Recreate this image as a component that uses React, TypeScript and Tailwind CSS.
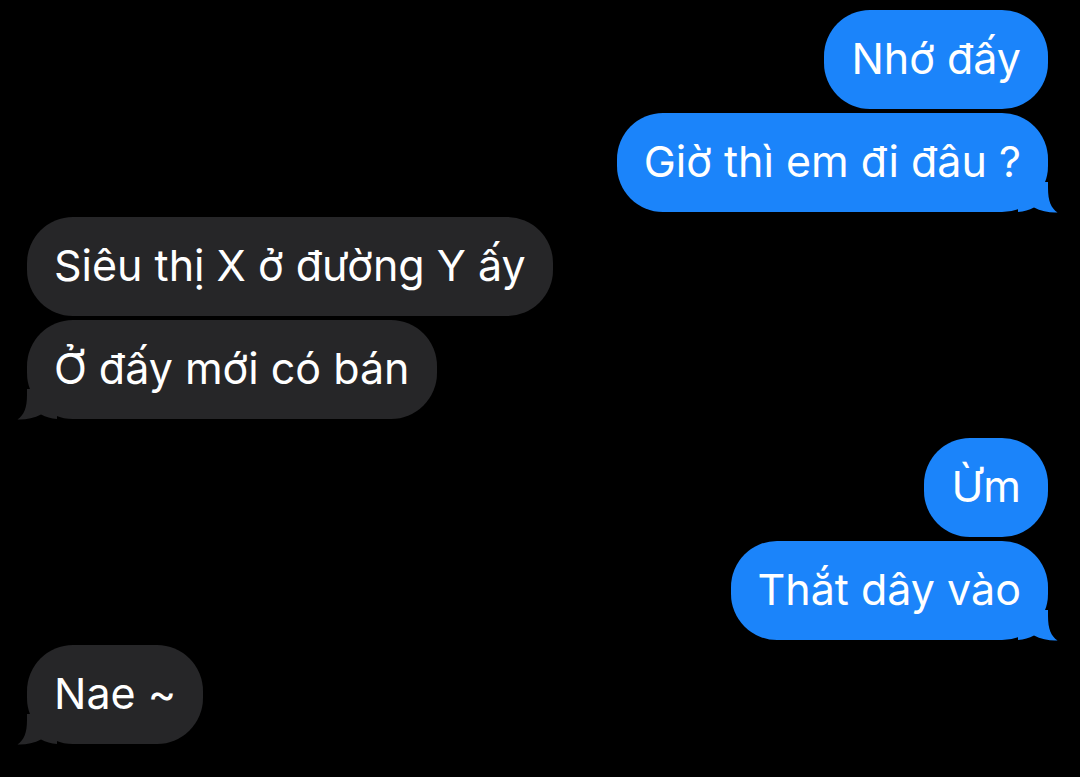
import React from "react";

const BLUE_HEX = "#1b84fa";
const GRAY_HEX = "#262628";

function Tail({ side, color }: { side: "left" | "right"; color: string }) {
  return (
    <svg
      width="40"
      height="30"
      viewBox="0 0 40 30"
      overflow="visible"
      className={
        side === "right"
          ? "absolute right-[-10px] bottom-0 overflow-visible"
          : "absolute left-[-10px] bottom-0 scale-x-[-1] overflow-visible"
      }
    >
      <path
        d="M0 0 H30 V6 C30 19 33 26 39.5 30.5 C33 31 23 29.5 16 25.5 C11 28 6 29.6 0 30 Z"
        fill={color}
      />
    </svg>
  );
}

function Bubble({
  text,
  me,
  tail,
}: {
  text: string;
  me: boolean;
  tail?: boolean;
}) {
  return (
    <div className={`flex ${me ? "justify-end" : "justify-start"}`}>
      <div
        className={`relative h-[99px] rounded-[46px] px-[27px] flex items-center text-white text-[43px] leading-none ${
          me ? "bg-[#1b84fa]" : "bg-[#262628]"
        }`}
      >
        {tail && <Tail side={me ? "right" : "left"} color={me ? BLUE_HEX : GRAY_HEX} />}
        <span className="relative z-10 pb-[2px]">{text}</span>
      </div>
    </div>
  );
}

export default function App() {
  return (
    <div
      className="w-[1080px] h-[777px] bg-black overflow-hidden pt-[10px] pl-[27px] pr-[32px] flex flex-col"
      style={{ fontFamily: "Inter, 'Noto Sans', sans-serif" }}
    >
      <div className="flex flex-col gap-[4px]">
        <Bubble text="Nhớ đấy" me />
        <Bubble text="Giờ thì em đi đâu ?" me tail />
      </div>
      <div className="flex flex-col gap-[4px] mt-[5px]">
        <Bubble text="Siêu thị X ở đường Y ấy" me={false} />
        <Bubble text="Ở đấy mới có bán" me={false} tail />
      </div>
      <div className="flex flex-col gap-[4px] mt-[19px]">
        <Bubble text="Ừm" me />
        <Bubble text="Thắt dây vào" me tail />
      </div>
      <div className="flex flex-col mt-[5px]">
        <Bubble text="Nae ~" me={false} tail />
      </div>
    </div>
  );
}
